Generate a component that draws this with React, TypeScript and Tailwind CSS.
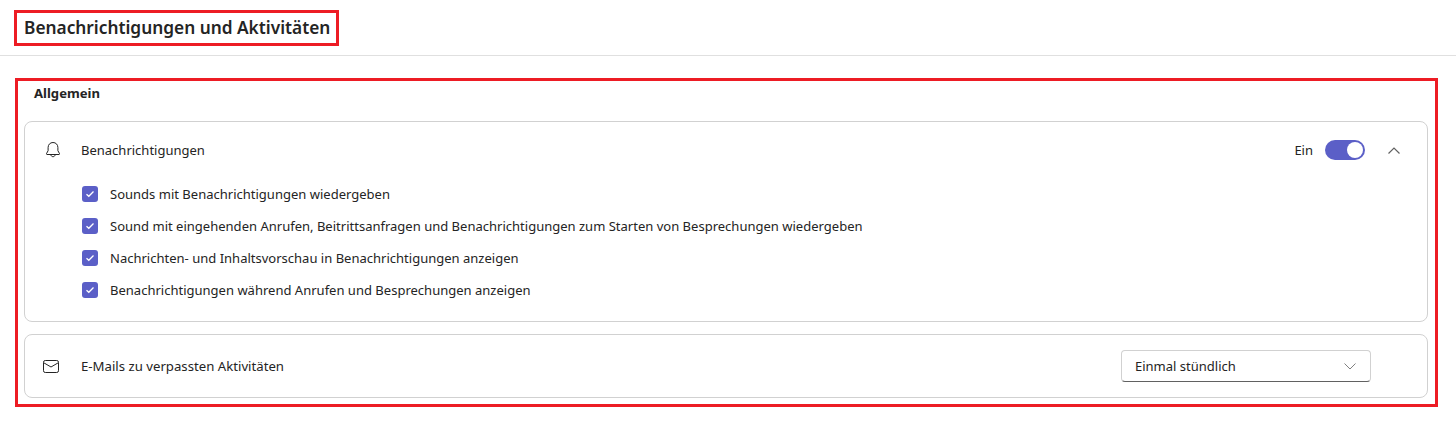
const font = "font-['Noto_Sans',sans-serif]";

const options = [
  "Sounds mit Benachrichtigungen wiedergeben",
  "Sound mit eingehenden Anrufen, Beitrittsanfragen und Benachrichtigungen zum Starten von Besprechungen wiedergeben",
  "Nachrichten- und Inhaltsvorschau in Benachrichtigungen anzeigen",
  "Benachrichtigungen während Anrufen und Besprechungen anzeigen",
];

function BellIcon() {
  return (
    <svg width="16" height="18" viewBox="0 0 16 18" fill="none" stroke="#242424" strokeWidth="1">
      <path d="M8 1.5c-2.9 0-4.9 2.2-4.9 5v3.2L1.5 12.6c-.2.4 0 .9.5.9h12c.5 0 .7-.5.5-.9l-1.600-2.900V6.500c0-2.800-2-5-4.900-5Z" strokeLinejoin="round" />
      <path d="M5.800 13.700c.2 1.200 1.100 2 2.200 2s2-.8 2.200-2" />
    </svg>
  );
}

function MailIcon() {
  return (
    <svg width="16" height="13" viewBox="0 0 16 13" fill="none" stroke="#242424" strokeWidth="1">
      <rect x="0.500" y="0.500" width="15" height="12" rx="1.800" />
      <path d="M0.800 2.800 8 7l7.200-4.200" />
    </svg>
  );
}

function Chevron({ up }: { up?: boolean }) {
  return (
    <svg width="12" height="7" viewBox="0 0 12 7" fill="none" stroke={up ? "#616161" : "#808080"} strokeWidth={up ? 1.2 : 1}>
      <path d={up ? "M0.500 6.500 6 1l5.500 5.500" : "M0.500 0.500 6 6l5.500-5.500"} />
    </svg>
  );
}

function Checkbox() {
  return (
    <span className="flex h-4 w-4 items-center justify-center rounded-[3px] bg-[#5b5fc7]">
      <svg width="10" height="8" viewBox="0 0 10 8" fill="none" stroke="#fff" strokeWidth="1.300">
        <path d="M1.500 4.200 3.800 6.300 8.500 1.500" />
      </svg>
    </span>
  );
}

export default function App() {
  return (
    <div className={`${font} h-[421px] w-[1456px] overflow-hidden bg-white text-[#242424]`}>
      <header className="h-[56px] border-b border-[#e0e0e0] pl-[14px] pt-[10px]">
        <h1 className="flex h-[36px] w-[325px] items-center border-[3px] border-[#ed1c24] pl-[7px] text-[17.3px] font-semibold whitespace-nowrap">
          Benachrichtigungen und Aktivitäten
        </h1>
      </header>

      <section className="ml-[15px] mt-[22px] h-[329px] w-[1423px] border-[3px] border-[#ed1c24] pl-[6px] pr-[7px]">
        <h2 className="pl-[10px] pt-[2px] text-[13.1px] leading-[20px] font-bold">Allgemein</h2>

        <div className="mt-[18px] h-[201px] rounded-lg border border-[#d1d1d1]">
          <div className="flex h-[56px] items-center">
            <span className="ml-[20px] flex w-[36px]"><BellIcon /></span>
            <span className="pt-[2px] text-[13px]">Benachrichtigungen</span>
            <span className="ml-auto pt-[2px] text-[13px]">Ein</span>
            <span className="ml-[12px] flex h-5 w-10 items-center justify-end rounded-full bg-[#5b5fc7] pr-[2px]">
              <span className="h-4 w-4 rounded-full bg-white" />
            </span>
            <span className="ml-[23px] mr-[27px] flex"><Chevron up /></span>
          </div>
          <ul className="flex flex-col gap-[12px] pl-[57px] pt-[6px]">
            {options.map((label) => (
              <li key={label} className="flex h-[20px] items-center gap-[12px] text-[13.03px]">
                <Checkbox />
                <span className="pt-[1px]">{label}</span>
              </li>
            ))}
          </ul>
        </div>

        <div className="mt-[12px] flex h-[64px] items-center rounded-lg border border-[#d1d1d1]">
          <span className="ml-[18px] flex w-[38px]"><MailIcon /></span>
          <span className="pt-[2px] text-[13.2px]">E-Mails zu verpassten Aktivitäten</span>
          <div className="ml-auto mr-[56px] flex h-[32px] w-[250px] items-center justify-between rounded border border-[#d1d1d1] border-b-[#616161] pl-[13px] pr-[14px] text-[13px]">
            <span className="pt-[1px]">Einmal stündlich</span>
            <Chevron />
          </div>
        </div>
      </section>
    </div>
  );
}
